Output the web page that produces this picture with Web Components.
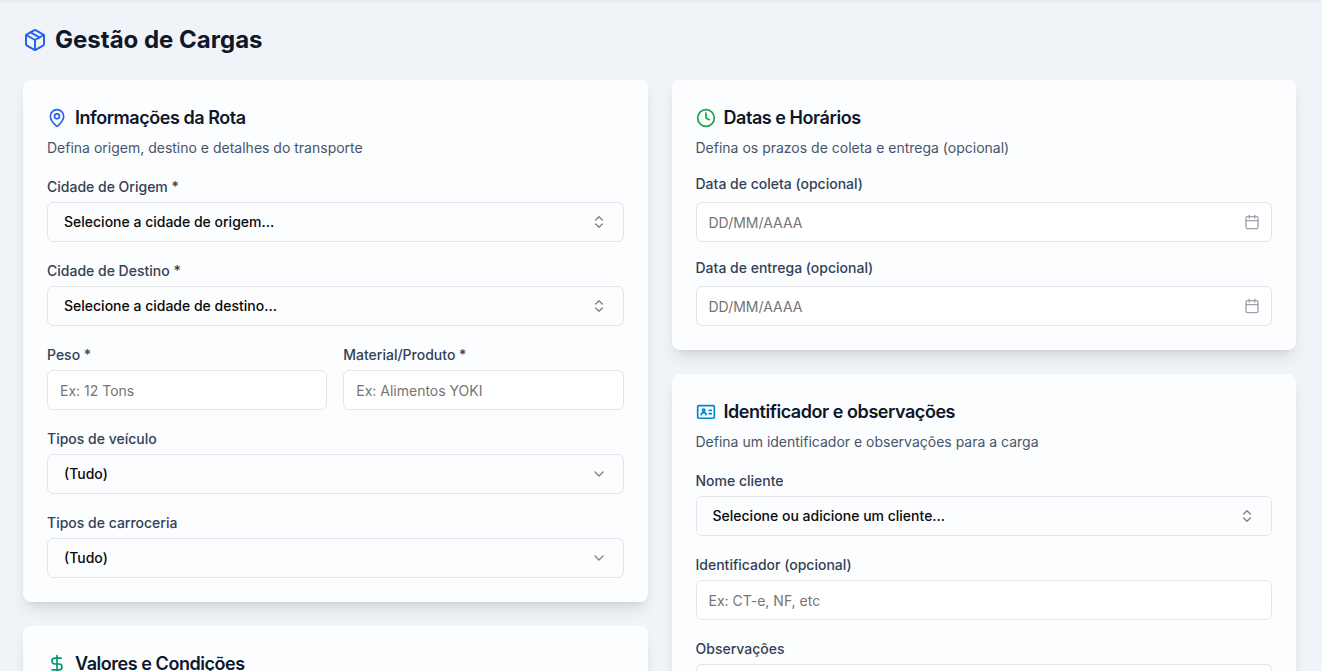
<!DOCTYPE html>
<html lang="pt-BR">
<head>
<meta charset="utf-8">
<title>Gestão de Cargas</title>
<style>
  body {
    margin: 0;
    height: 671px;
    overflow: hidden;
    background: #f0f3f8;
    font-family: Inter, "Liberation Sans", sans-serif;
    font-size: 14px;
    line-height: 20px;
    color: #0f172a;
  }
</style>
</head>
<body>
<cargo-page heading="Gestão de Cargas">
  <form-card slot="left" icon="pin" tone="#2563eb" heading="Informações da Rota" description="Defina origem, destino e detalhes do transporte">
    <form-field label="Cidade de Origem *"><select-button icon="updown">Selecione a cidade de origem...</select-button></form-field>
    <form-field label="Cidade de Destino *"><select-button icon="updown">Selecione a cidade de destino...</select-button></form-field>
    <field-row>
      <form-field label="Peso *"><text-input placeholder="Ex: 12 Tons"></text-input></form-field>
      <form-field label="Material/Produto *"><text-input placeholder="Ex: Alimentos YOKI"></text-input></form-field>
    </field-row>
    <form-field label="Tipos de veículo"><select-button icon="down">(Tudo)</select-button></form-field>
    <form-field label="Tipos de carroceria"><select-button icon="down">(Tudo)</select-button></form-field>
  </form-card>
  <form-card slot="left" icon="dollar" tone="#059669" heading="Valores e Condições"></form-card>

  <form-card slot="right" icon="clock" tone="#16a34a" heading="Datas e Horários" description="Defina os prazos de coleta e entrega (opcional)">
    <form-field spaced label="Data de coleta (opcional)"><text-input icon="calendar" placeholder="DD/MM/AAAA"></text-input></form-field>
    <form-field spaced label="Data de entrega (opcional)"><text-input icon="calendar" placeholder="DD/MM/AAAA"></text-input></form-field>
  </form-card>
  <form-card slot="right" icon="idcard" tone="#0284c7" heading="Identificador e observações" description="Defina um identificador e observações para a carga">
    <form-field label="Nome cliente"><select-button icon="updown">Selecione ou adicione um cliente...</select-button></form-field>
    <form-field label="Identificador (opcional)"><text-input placeholder="Ex: CT-e, NF, etc"></text-input></form-field>
    <form-field label="Observações"><text-input></text-input></form-field>
  </form-card>
</cargo-page>

<script>
const ICONS = {
  box: '<path d="m7.5 4.27 9 5.15"/><path d="M21 8a2 2 0 0 0-1-1.73l-7-4a2 2 0 0 0-2 0l-7 4A2 2 0 0 0 3 8v8a2 2 0 0 0 1 1.73l7 4a2 2 0 0 0 2 0l7-4A2 2 0 0 0 21 16Z"/><path d="m3.3 7 8.7 5 8.7-5"/><path d="M12 22V12"/>',
  pin: '<path d="M20 10c0 4.993-5.539 10.193-7.399 11.799a1 1 0 0 1-1.202 0C9.539 20.193 4 14.993 4 10a8 8 0 0 1 16 0"/><circle cx="12" cy="10" r="3"/>',
  clock: '<circle cx="12" cy="12" r="10"/><path d="M12 6v6l4 2"/>',
  dollar: '<path d="M12 2v20"/><path d="M17 5H9.5a3.5 3.5 0 0 0 0 7h5a3.5 3.5 0 0 1 0 7H6"/>',
  idcard: '<rect x="2" y="4.3" width="20" height="15.2" rx="1.5"/><circle cx="9.2" cy="10" r="1.4"/><path d="M6.2 15.300c.3-1.800 1.500-2.600 3-2.600s2.700.8 3 2.600"/><path d="M15.800 10h2.600M15.800 14h2.600"/>',
  updown: '<path d="m7 15 5 5 5-5"/><path d="m7 9 5-5 5 5"/>',
  down: '<path d="m6 9 6 6 6-6"/>',
  calendar: '<path d="M8 2v4"/><path d="M16 2v4"/><rect width="18" height="18" x="3" y="4" rx="2"/><path d="M3 10h18"/>'
};

class SvgIcon extends HTMLElement {
  constructor() {
    super();
    this.attachShadow({ mode: 'open' });
  }

  connectedCallback() {
    const size = this.getAttribute('size') || 16;
    this.shadowRoot.innerHTML = `
      <style>
        :host { display: block; flex: none; width: ${size}px; height: ${size}px; }
        svg { display: block; }
      </style>
      <svg width="${size}" height="${size}" viewBox="0 0 24 24" fill="none" stroke="currentColor"
        stroke-width="2" stroke-linecap="round" stroke-linejoin="round">${ICONS[this.getAttribute('name')]}</svg>
    `;
  }
}

class CargoPage extends HTMLElement {
  constructor() {
    super();
    this.attachShadow({ mode: 'open' });
    this.shadowRoot.innerHTML = `
      <style>
        :host {
          display: block;
          box-sizing: border-box;
          height: 671px;
          padding: 24px 24px 0 23px;
          overflow: hidden;
          border-right: 2px solid #f1f3f6;
          box-shadow: inset 0 3px 3px -2px rgba(0, 0, 0, .06);
        }
        header { display: flex; align-items: center; gap: 8px; height: 32px; margin-bottom: 24px; }
        header svg-icon { color: #2563eb; }
        h1 { margin: 0; font-size: 24px; line-height: 32px; font-weight: 700; }
        main { display: grid; grid-template-columns: 1fr 1fr; gap: 24px; align-items: start; }
        .column { display: grid; gap: 24px; }
      </style>
      <header><svg-icon name="box" size="24"></svg-icon><h1></h1></header>
      <main>
        <div class="column"><slot name="left"></slot></div>
        <div class="column"><slot name="right"></slot></div>
      </main>
    `;
    this.shadowRoot.querySelector('h1').textContent = this.getAttribute('heading');
  }
}

class FormCard extends HTMLElement {
  constructor() {
    super();
    this.attachShadow({ mode: 'open' });
    const description = this.getAttribute('description');
    this.shadowRoot.innerHTML = `
      <style>
        :host {
          display: block;
          padding: 24px;
          border-radius: 8px;
          background: #fcfdff;
          box-shadow: 0 10px 15px -3px rgba(0, 0, 0, .1), 0 4px 6px -4px rgba(0, 0, 0, .1);
        }
        .title { display: flex; align-items: center; gap: 8px; height: 28px; }
        h2 { margin: 0; font-size: 18px; line-height: 28px; font-weight: 600; letter-spacing: -.45px; }
        p { margin: 6px 0 19px; color: #475569; }
        .fields { display: grid; gap: 19px; }
      </style>
      <div class="title">
        <svg-icon name="${this.getAttribute('icon')}" size="20" style="color: ${this.getAttribute('tone')}"></svg-icon>
        <h2>${this.getAttribute('heading')}</h2>
      </div>
      ${description ? `<p>${description}</p>` : ''}
      <div class="fields"><slot></slot></div>
    `;
  }
}

class FieldRow extends HTMLElement {
  constructor() {
    super();
    this.attachShadow({ mode: 'open' });
    this.shadowRoot.innerHTML = `
      <style>
        :host { display: grid; grid-template-columns: 1fr 1fr; gap: 16px; }
      </style>
      <slot></slot>
    `;
  }
}

class FormField extends HTMLElement {
  constructor() {
    super();
    this.attachShadow({ mode: 'open' });
    this.shadowRoot.innerHTML = `
      <style>
        :host { display: block; min-width: 0; }
        label { display: block; margin-bottom: 5px; font-weight: 500; color: #334155; }
        /* same field height, with the label further from its control */
        :host([spaced]) label { margin: -3px 0 8px; }
      </style>
      <label>${this.getAttribute('label')}</label>
      <slot></slot>
    `;
  }
}

class SelectButton extends HTMLElement {
  constructor() {
    super();
    this.attachShadow({ mode: 'open' });
    this.shadowRoot.innerHTML = `
      <style>
        :host { display: block; }
        button {
          display: flex;
          align-items: center;
          justify-content: space-between;
          box-sizing: border-box;
          width: 100%;
          height: 40px;
          padding: 0 16px;
          border: 1px solid #e2e4e8;
          border-radius: 6px;
          background: #fcfdff;
          font: inherit;
          font-weight: 500;
          color: #0a0a0a;
        }
        svg-icon { opacity: .5; }
      </style>
      <button type="button"><span><slot></slot></span><svg-icon name="${this.getAttribute('icon')}"></svg-icon></button>
    `;
  }
}

class TextInput extends HTMLElement {
  constructor() {
    super();
    this.attachShadow({ mode: 'open' });
    const icon = this.getAttribute('icon');
    this.shadowRoot.innerHTML = `
      <style>
        :host {
          display: flex;
          align-items: center;
          box-sizing: border-box;
          height: 40px;
          padding: 0 11px 0 12px;
          border: 1px solid #e2e4e8;
          border-radius: 6px;
          background: #fff;
        }
        input {
          flex: 1;
          min-width: 0;
          height: 20px;
          padding: 1px 0 0;
          border: 0;
          background: none;
          font: inherit;
          outline: none;
        }
        input::placeholder { color: #757575; }
        svg-icon { color: #9ca3af; }
      </style>
      <input type="text" placeholder="${this.getAttribute('placeholder') || ''}">
      ${icon ? `<svg-icon name="${icon}"></svg-icon>` : ''}
    `;
  }
}

customElements.define('svg-icon', SvgIcon);
customElements.define('cargo-page', CargoPage);
customElements.define('form-card', FormCard);
customElements.define('field-row', FieldRow);
customElements.define('form-field', FormField);
customElements.define('select-button', SelectButton);
customElements.define('text-input', TextInput);
</script>
</body>
</html>
